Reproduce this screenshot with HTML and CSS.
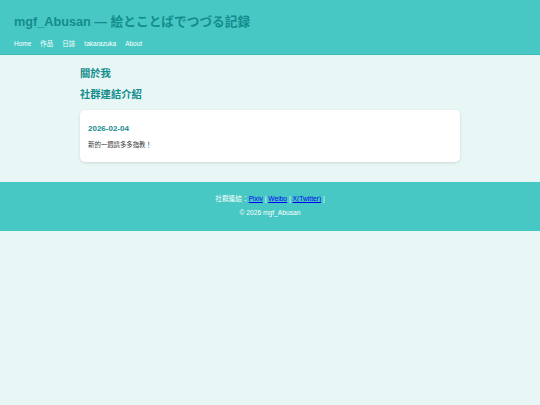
FILE: index.html
```html
<!DOCTYPE html>
<html lang="zh-Hant">
<head>
<meta charset="utf-8">
<title>mgf_Abusan</title>
<link rel="stylesheet" href="styles.css">
</head>
<body>
<header class="site-header">
  <h1 class="site-title">mgf_Abusan — 絵とことばでつづる記録</h1>
  <nav class="site-nav">
    <a href="#">Home</a>
    <a href="#">作品</a>
    <a href="#">日誌</a>
    <a href="#">takarazuka</a>
    <a href="#">About</a>
  </nav>
</header>
<main class="content">
  <h2 class="section-title">關於我</h2>
  <h2 class="section-title">社群連結介紹</h2>
  <article class="card">
    <h3 class="card-date">2026-02-04</h3>
    <p class="card-text">新的一週請多多指教！</p>
  </article>
</main>
<footer class="site-footer">
  <p class="footer-links">社群連結：<a href="#">Pixiv</a> | <a href="#">Weibo</a> | <a href="#">X(Twitter)</a> |</p>
  <p class="footer-copy">© 2026 mgf_Abusan</p>
</footer>
</body>
</html>
```
FILE: styles.css
```css
html, body {
  margin: 0;
  padding: 0;
}
body {
  background: #e8f6f6;
  font-family: "Liberation Sans", Arial, "Noto Sans CJK TC", sans-serif;
  color: #333;
}
.site-header {
  background: #48c8c4;
  border-bottom: 1px solid #40b9b5;
  padding: 14px 14px 0;
  height: 40px;
}
.site-title {
  margin: 0;
  font-size: 12.7px;
  line-height: 17px;
  font-weight: bold;
  color: #138d8d;
}
.site-nav {
  display: flex;
  gap: 9px;
  margin-top: 8px;
}
.site-nav a {
  color: #ffffff;
  text-decoration: none;
  font-size: 6.5px;
  line-height: 10px;
}
.content {
  width: 380px;
  margin: 0 auto;
  padding: 12px 0 20px;
}
.section-title {
  margin: 0 0 7px;
  font-size: 10.3px;
  line-height: 14px;
  font-weight: bold;
  color: #138d8d;
}
.card {
  background: #ffffff;
  border-radius: 5px;
  box-shadow: 0 1px 3px rgba(0, 0, 0, 0.12);
  padding: 13px 8px 12px;
  margin-top: 8px;
}
.card-date {
  margin: 0 0 6px;
  font-size: 8px;
  line-height: 11px;
  font-weight: bold;
  color: #138d8d;
}
.card-text {
  margin: 0;
  font-size: 6.4px;
  line-height: 10px;
  color: #333;
}
.site-footer {
  background: #48c8c4;
  padding: 10px 0 11px;
  text-align: center;
  color: #ffffff;
  font-size: 6.7px;
}
.site-footer p {
  margin: 0;
  line-height: 14px;
}
.footer-links a {
  color: #0000ee;
  text-decoration: underline;
}
```
